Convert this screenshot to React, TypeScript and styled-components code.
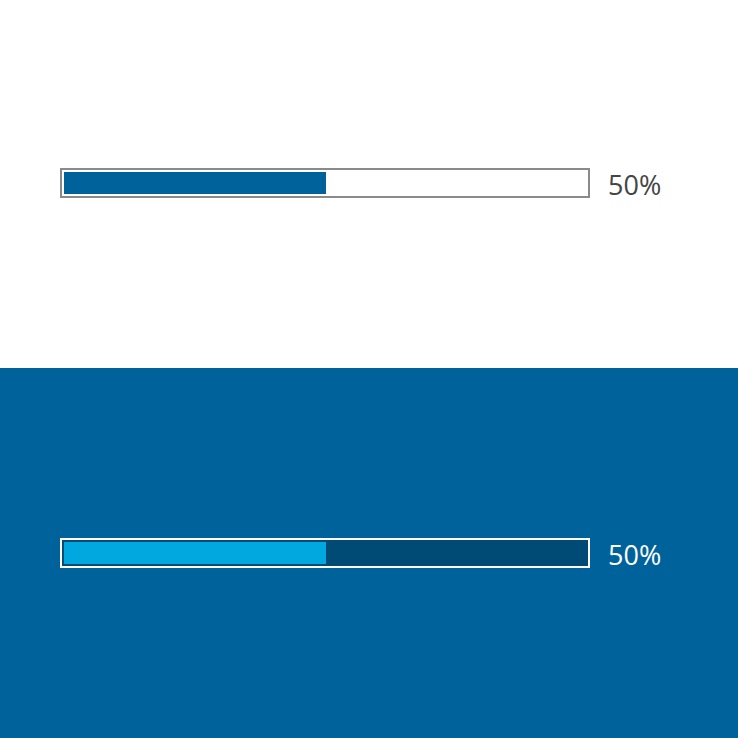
import styled, { createGlobalStyle } from "styled-components";

const GlobalStyle = createGlobalStyle`
  html, body {
    margin: 0;
    padding: 0;
    height: 100%;
  }
  #root {
    height: 100%;
  }
  body {
    font-family: "Open Sans", "Noto Sans", sans-serif;
  }
`;

interface ThemeProps {
  $dark?: boolean;
}

const Page = styled.div`
  display: flex;
  flex-direction: column;
  height: 738px;
  width: 738px;
`;

const Panel = styled.div<ThemeProps>`
  box-sizing: border-box;
  height: ${(p) => (p.$dark ? "370px" : "368px")};
  display: flex;
  align-items: center;
  padding-left: 60px;
  padding-bottom: ${(p) => (p.$dark ? "0" : "2px")};
  background: ${(p) => (p.$dark ? "#00629b" : "#ffffff")};
`;

const Track = styled.div<ThemeProps>`
  box-sizing: border-box;
  width: 530px;
  height: 30px;
  padding: 2px;
  border: 2px solid ${(p) => (p.$dark ? "#ffffff" : "#8a8a8a")};
  background: ${(p) => (p.$dark ? "#004b75" : "#ffffff")};
`;

const Fill = styled.div<ThemeProps>`
  height: 100%;
  background: ${(p) => (p.$dark ? "#00a8e0" : "#00629b")};
`;

const Label = styled.span<ThemeProps>`
  margin-left: 18px;
  margin-top: 4px;
  font-size: 27px;
  line-height: 30px;
  color: ${(p) => (p.$dark ? "#ffffff" : "#444444")};
`;

const ProgressRow = ({ value, dark }: { value: number; dark?: boolean }) => (
  <Panel $dark={dark}>
    <Track $dark={dark}>
      <Fill $dark={dark} style={{ width: `calc(${value}% + 1px)` }} />
    </Track>
    <Label $dark={dark}>{value}%</Label>
  </Panel>
);

const App = () => {
  return (
    <>
      <GlobalStyle />
      <Page>
        <ProgressRow value={50} />
        <ProgressRow value={50} dark />
      </Page>
    </>
  );
};

export default App;
